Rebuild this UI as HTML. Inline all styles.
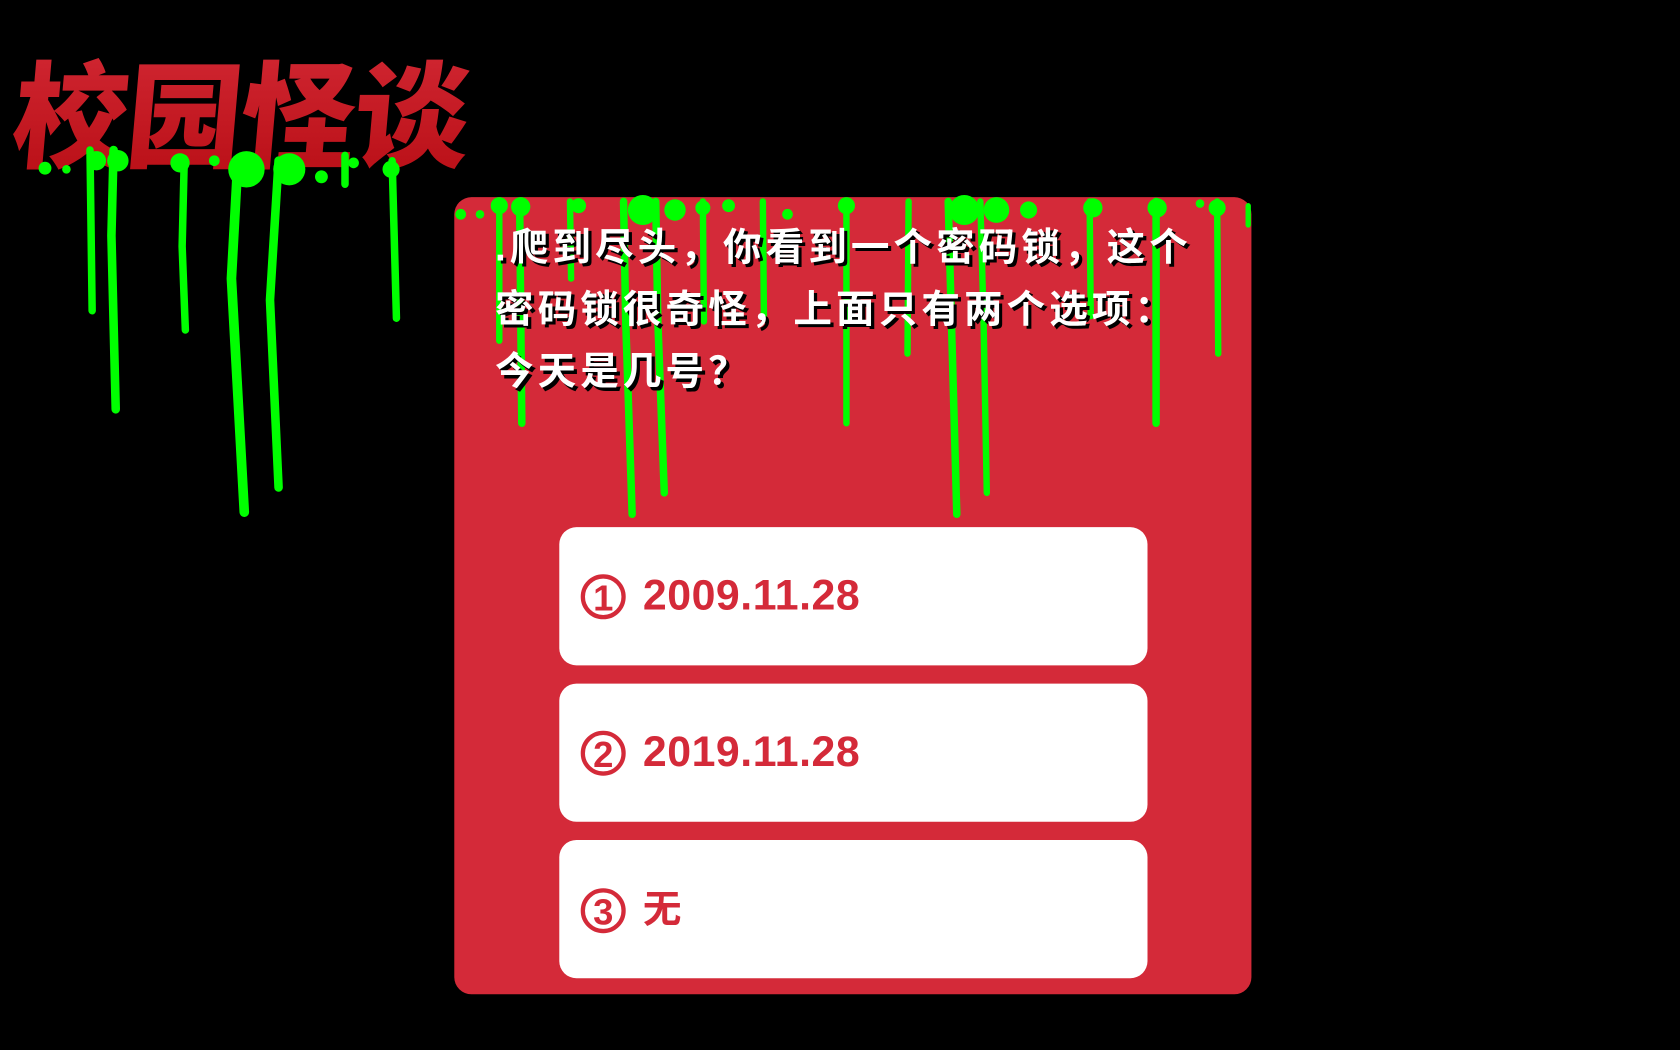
<!DOCTYPE html>
<html><head><meta charset="utf-8"><style>
html,body{margin:0;padding:0;background:#000;width:1680px;height:1050px;overflow:hidden}
svg{display:block}
text{font-family:"Liberation Sans","Noto Sans CJK SC",sans-serif;font-weight:bold}
</style></head><body>
<svg width="1680" height="1050" viewBox="0 0 1568 980" xmlns="http://www.w3.org/2000/svg">
<defs>
<linearGradient id="tg" x1="0" y1="0" x2="0" y2="1"><stop offset="0" stop-color="#d42a36"/><stop offset="1" stop-color="#b70d14"/></linearGradient>
</defs>
<rect width="1568" height="980" fill="#000"/>
<!-- title -->
<text x="14" y="148" font-size="108" fill="url(#tg)" style="font-family:'Noto Sans CJK SC',sans-serif;font-weight:900" letter-spacing="-2" transform="skewX(-5) translate(8,0)">校园怪谈</text>
<!-- left drips -->
<g stroke="#00ff00" stroke-linecap="round" fill="none">
<path d="M84 140 L86 290" stroke-width="7"/>
<path d="M106 140 L104 220 L108 382" stroke-width="8"/>
<path d="M172 148 L170 230 L173 308" stroke-width="7"/>
<path d="M222 150 L216 260 L228 478" stroke-width="9"/>
<path d="M260 150 L252 280 L260 455" stroke-width="8"/>
<path d="M366 150 L370 297" stroke-width="7"/>
<path d="M322 145 L322 172" stroke-width="7"/>
</g>
<g fill="#00ff00">
<circle cx="42" cy="157" r="6"/><circle cx="62" cy="158" r="4"/><circle cx="90" cy="150" r="9"/><circle cx="110" cy="150" r="10"/>
<circle cx="168" cy="152" r="9"/><circle cx="230" cy="158" r="17"/><circle cx="270" cy="158" r="15"/><circle cx="300" cy="165" r="6"/>
<circle cx="365" cy="158" r="8"/><circle cx="330" cy="152" r="5"/><circle cx="200" cy="150" r="5"/>
</g>
<!-- panel -->
<rect x="424" y="184" width="744" height="744" rx="16" fill="#d42a39"/>
<g stroke="#00ff00" stroke-linecap="round" fill="none">
<path d="M466 188 L466 318" stroke-width="6"/>
<path d="M485 188 L487 395" stroke-width="7"/>
<path d="M532 188 L533 260" stroke-width="6"/>
<path d="M582 188 L584 300 L590 480" stroke-width="7"/>
<path d="M612 188 L614 300 L620 460" stroke-width="7"/>
<path d="M656 188 L657 300" stroke-width="6"/>
<path d="M712 188 L713 295" stroke-width="6"/>
<path d="M790 188 L790 395" stroke-width="6"/>
<path d="M848 188 L847 330" stroke-width="6"/>
<path d="M885 188 L888 300 L893 480" stroke-width="7"/>
<path d="M915 188 L918 300 L921 460" stroke-width="6"/>
<path d="M1017 188 L1018 295" stroke-width="6"/>
<path d="M1079 188 L1079 395" stroke-width="7"/>
<path d="M1136 188 L1137 330" stroke-width="6"/>
<path d="M1165 192 L1165 210" stroke-width="5"/>
</g>
<g fill="#00ff00">
<circle cx="430" cy="200" r="5"/><circle cx="448" cy="200" r="4"/><circle cx="466" cy="192" r="8"/><circle cx="486" cy="193" r="9"/>
<circle cx="540" cy="192" r="7"/><circle cx="600" cy="196" r="14"/><circle cx="630" cy="196" r="10"/><circle cx="656" cy="194" r="7"/>
<circle cx="680" cy="192" r="6"/><circle cx="735" cy="200" r="5"/><circle cx="790" cy="192" r="8"/><circle cx="900" cy="196" r="14"/>
<circle cx="930" cy="196" r="12"/><circle cx="960" cy="196" r="8"/><circle cx="1020" cy="194" r="9"/><circle cx="1080" cy="194" r="9"/>
<circle cx="1136" cy="194" r="8"/><circle cx="1120" cy="190" r="4"/>
</g>
<!-- question text -->
<g font-size="36" letter-spacing="3.8">
<g fill="#000" transform="translate(3,3)">
<text x="462" y="243">.爬到尽头，你看到一个密码锁，这个</text>
<text x="462" y="301">密码锁很奇怪，上面只有两个选项：</text>
<text x="462" y="359">今天是几号？</text>
</g>
<g fill="#fff">
<text x="462" y="243">.爬到尽头，你看到一个密码锁，这个</text>
<text x="462" y="301">密码锁很奇怪，上面只有两个选项：</text>
<text x="462" y="359">今天是几号？</text>
</g>
</g>
<!-- options -->
<g fill="#fff">
<rect x="522" y="492" width="549" height="129" rx="16"/>
<rect x="522" y="638" width="549" height="129" rx="16"/>
<rect x="522" y="784" width="549" height="129" rx="16"/>
</g>
<g fill="#d42a39">
<circle cx="563" cy="557" r="19" fill="none" stroke="#d42a39" stroke-width="4"/>
<text x="563" y="570" font-size="34" text-anchor="middle">1</text>
<text x="600" y="569" font-size="40" letter-spacing="0.5">2009.11.28</text>
<circle cx="563" cy="703" r="19" fill="none" stroke="#d42a39" stroke-width="4"/>
<text x="563" y="716" font-size="34" text-anchor="middle">2</text>
<text x="600" y="715" font-size="40" letter-spacing="0.5">2019.11.28</text>
<circle cx="563" cy="850" r="19" fill="none" stroke="#d42a39" stroke-width="4"/>
<text x="563" y="863" font-size="34" text-anchor="middle">3</text>
<text x="600" y="861" font-size="36">无</text>
</g>
</svg>
</body></html>
